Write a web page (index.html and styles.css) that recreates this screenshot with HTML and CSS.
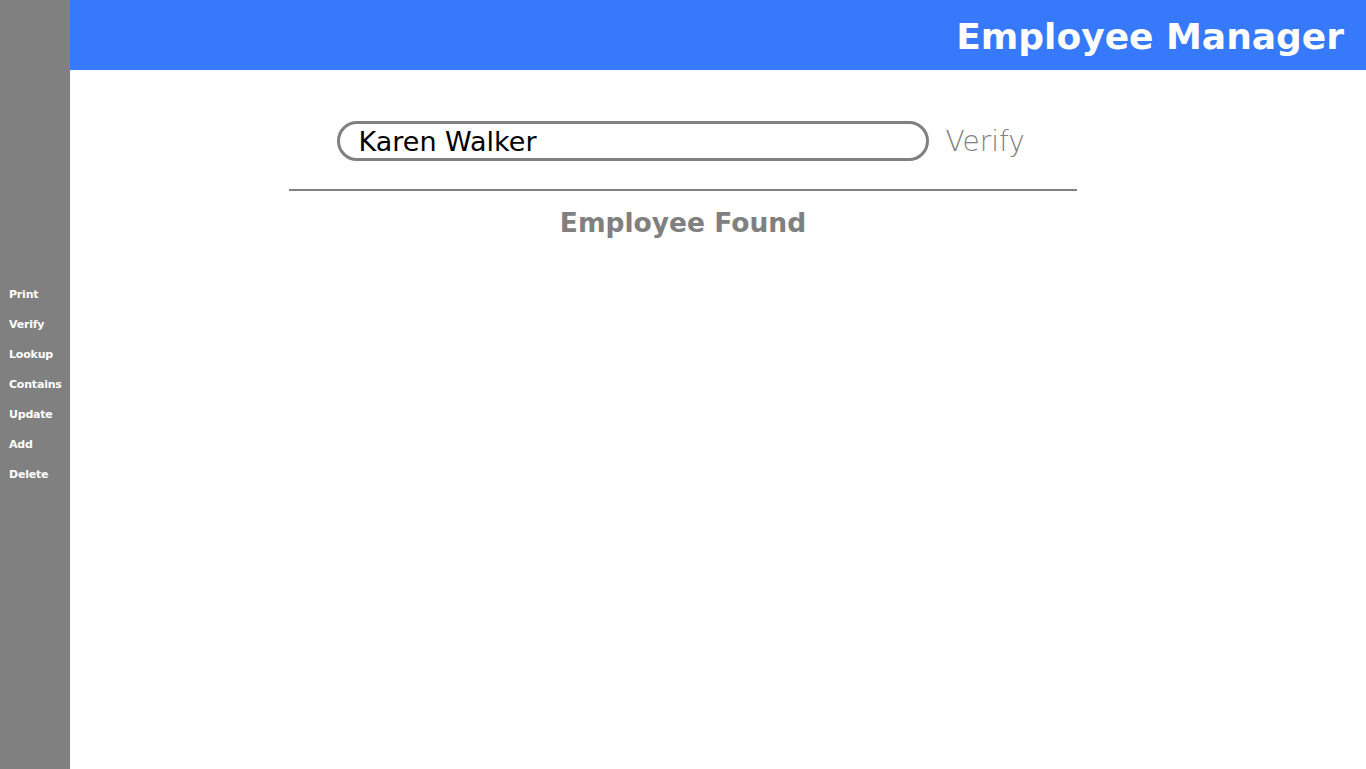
FILE: index.html
```html
<!DOCTYPE html>
<html>
<head>
<meta charset="utf-8">
<link rel="stylesheet" href="styles.css">
</head>
<body>
<div class="app">
  <nav class="sidebar">
    <a class="nav-item">Print</a>
    <a class="nav-item">Verify</a>
    <a class="nav-item">Lookup</a>
    <a class="nav-item">Contains</a>
    <a class="nav-item">Update</a>
    <a class="nav-item">Add</a>
    <a class="nav-item">Delete</a>
  </nav>
  <div class="main">
    <header class="topbar"><h1 class="title">Employee Manager</h1></header>
    <section class="content">
      <div class="search-row">
        <div class="search-box">Karen Walker</div>
        <span class="verify">Verify</span>
      </div>
      <hr class="divider">
      <h2 class="result">Employee Found</h2>
    </section>
  </div>
</div>
</body>
</html>
```
FILE: styles.css
```css
* { box-sizing: border-box; }
html, body { margin: 0; padding: 0; height: 100%; }
body { font-family: "DejaVu Sans", "Open Sans", sans-serif; background: #fff; overflow: hidden; }
.app { display: grid; grid-template-columns: 70px 1fr; height: 769px; }
.sidebar {
  background: #808080;
  display: flex; flex-direction: column; justify-content: center;
  padding-left: 9px;
}
.nav-item {
  color: #fff; font-weight: bold; font-size: 11px; line-height: 30px; height: 30px;
  letter-spacing: -0.2px;
}
.main { display: flex; flex-direction: column; }
.topbar {
  height: 70px; background: #3779fb;
  display: flex; align-items: center; justify-content: flex-end;
  padding-right: 22px; padding-top: 2px;
}
.title { margin: 0; color: #fff; font-size: 36px; font-weight: bold; }
.content {
  padding-right: 70px;
  display: flex; flex-direction: column; align-items: center;
  padding-top: 51px;
}
.search-row { display: flex; align-items: center; gap: 17px; margin-right: 4px; }
.search-box {
  width: 592px; height: 40px; border: 3px solid #808080; border-radius: 20px;
  padding-left: 19px; font-size: 27px; line-height: 35px; color: #000;
  font-weight: normal;
}
.verify { color: #808080; font-size: 28px; font-weight: 300; width: 80px; }
.divider {
  width: 788px; border: 0; border-top: 2px solid #808080; margin: 28px 0 0;
}
.result { margin: 16px 0 0; color: #808080; font-size: 26.5px; font-weight: bold; }
```
